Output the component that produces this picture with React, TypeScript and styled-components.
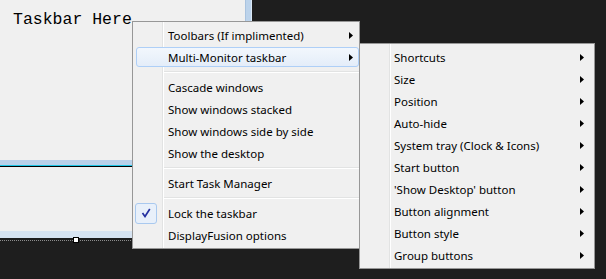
import styled, { createGlobalStyle } from 'styled-components';

const GlobalStyle = createGlobalStyle`
  html, body {
    margin: 0;
    padding: 0;
    background: #1e1e1e;
  }
`;

const Desktop = styled.div`
  position: relative;
  width: 606px;
  height: 279px;
  overflow: hidden;
  background: #1e1e1e;
`;

const DesignWindow = styled.div`
  width: 252px;
  display: flex;
  flex-direction: column;
`;

const FormRow = styled.div`
  display: flex;
  height: 231px;
`;

const FormSurface = styled.div`
  flex: 1;
  display: flex;
  flex-direction: column;
  background: #f0f0f0;
`;

const Caption = styled.div`
  margin: 10px 0 0 13px;
  font-family: 'Liberation Mono', 'Courier New', monospace;
  font-size: 16.5px;
  line-height: 20px;
  color: #000;
`;

const DockBand = styled.div`
  flex-shrink: 0;
  margin-top: 130px;
  height: 5px;
  background: #b9d1ea;
  border-bottom: 1px solid #1ec6e6;
  box-shadow: 0 1px 0 #000;
`;

const FrameEdge = styled.div`
  width: 7px;
  box-sizing: border-box;
  background: #bcd3eb;
  border-left: 1px solid #a9c3df;
  border-right: 1px solid #dbe8f5;
`;

const BottomFrame = styled.div`
  height: 7px;
  background: #d6e3f1;
`;

const SelectionLine = styled.div`
  position: relative;
  margin-top: 2px;
  height: 1px;
  background: repeating-linear-gradient(to right, #8c8c8c 0 1px, transparent 1px 2px);
`;

const Handle = styled.div`
  position: absolute;
  left: 73px;
  top: -3px;
  width: 6px;
  height: 6px;
  box-sizing: border-box;
  background: #fff;
  border: 1px solid #000;
`;

const Menu = styled.div<{ $left: number; $top: number; $width: number }>`
  position: absolute;
  left: ${(p) => p.$left}px;
  top: ${(p) => p.$top}px;
  width: ${(p) => p.$width}px;
  box-sizing: border-box;
  padding: 2px 0;
  border: 1px solid #979797;
  background:
    linear-gradient(
      to right,
      transparent 29px,
      #e2e3e3 29px,
      #e2e3e3 30px,
      #ffffff 30px,
      #ffffff 31px,
      transparent 31px
    ),
    #f0f0f0;
  font-family: 'Noto Sans', 'Open Sans', sans-serif;
  font-size: 11.5px;
  color: #000;
`;

const Item = styled.div<{ $hot?: boolean; $arrowGap: number }>`
  position: relative;
  height: 22px;
  display: flex;
  align-items: center;
  padding-right: ${(p) => p.$arrowGap}px;
  white-space: nowrap;

  ${(p) =>
    p.$hot &&
    `
    &::before {
      content: '';
      position: absolute;
      inset: 1px 0 1px 3px;
      border: 1px solid #aecff7;
      border-radius: 3px;
      background: linear-gradient(#f2f7fd, #e4edf9);
    }
  `}
`;

const Gutter = styled.span<{ $width: number }>`
  position: relative;
  width: ${(p) => p.$width}px;
  height: 100%;
  flex-shrink: 0;
  display: flex;
  align-items: center;
`;

const Label = styled.span`
  position: relative;
  flex: 1;
`;

const CheckBox = styled.span`
  margin-left: 2px;
  width: 22px;
  height: 21px;
  box-sizing: border-box;
  border: 1px solid #a9c9ef;
  border-radius: 3px;
  background: #e8f0fa;
  display: flex;
  align-items: center;
  justify-content: center;
`;

const Separator = styled.div`
  height: 8px;
  margin-left: 31px;
  display: flex;
  flex-direction: column;
  justify-content: center;

  &::before {
    content: '';
    height: 1px;
    background: #e2e3e3;
  }
  &::after {
    content: '';
    height: 1px;
    background: #ffffff;
  }
`;

const Arrow = () => (
  <svg width="4" height="7" viewBox="0 0 4 7" style={{ position: 'relative' }}>
    <path d="M0 0 L4 3.5 L0 7 Z" fill="#000" />
  </svg>
);

const Check = () => (
  <svg width="10" height="10" viewBox="0 0 10 10">
    <path d="M1.5 5 L4 8.5 L8.8 1" fill="none" stroke="#2531a0" strokeWidth="1.7" />
  </svg>
);

type Entry = { label?: string; sub?: boolean; hot?: boolean; checked?: boolean; sep?: boolean };

const mainEntries: Entry[] = [
  { label: 'Toolbars (If implimented)', sub: true },
  { label: 'Multi-Monitor taskbar', sub: true, hot: true },
  { sep: true },
  { label: 'Cascade windows' },
  { label: 'Show windows stacked' },
  { label: 'Show windows side by side' },
  { label: 'Show the desktop' },
  { sep: true },
  { label: 'Start Task Manager' },
  { sep: true },
  { label: 'Lock the taskbar', checked: true },
  { label: 'DisplayFusion options' },
];

const subEntries: Entry[] = [
  'Shortcuts',
  'Size',
  'Position',
  'Auto-hide',
  'System tray (Clock & Icons)',
  'Start button',
  "'Show Desktop' button",
  'Button alignment',
  'Button style',
  'Group buttons',
].map((label) => ({ label, sub: true }));

const MenuList = ({ entries, gutter, arrowGap }: { entries: Entry[]; gutter: number; arrowGap: number }) => (
  <>
    {entries.map((e, i) =>
      e.sep ? (
        <Separator key={i} />
      ) : (
        <Item key={i} $hot={e.hot} $arrowGap={arrowGap}>
          <Gutter $width={gutter}>
            {e.checked && (
              <CheckBox>
                <Check />
              </CheckBox>
            )}
          </Gutter>
          <Label>{e.label}</Label>
          {e.sub && <Arrow />}
        </Item>
      )
    )}
  </>
);

export default function App() {
  return (
    <Desktop>
      <GlobalStyle />
      <DesignWindow>
        <FormRow>
          <FormSurface>
            <Caption>Taskbar Here</Caption>
            <DockBand />
          </FormSurface>
          <FrameEdge />
        </FormRow>
        <BottomFrame />
        <SelectionLine>
          <Handle />
        </SelectionLine>
      </DesignWindow>

      <Menu $left={132} $top={21} $width={228}>
        <MenuList entries={mainEntries} gutter={35} arrowGap={6} />
      </Menu>

      <Menu $left={359} $top={43} $width={236}>
        <MenuList entries={subEntries} gutter={34} arrowGap={10} />
      </Menu>
    </Desktop>
  );
}
